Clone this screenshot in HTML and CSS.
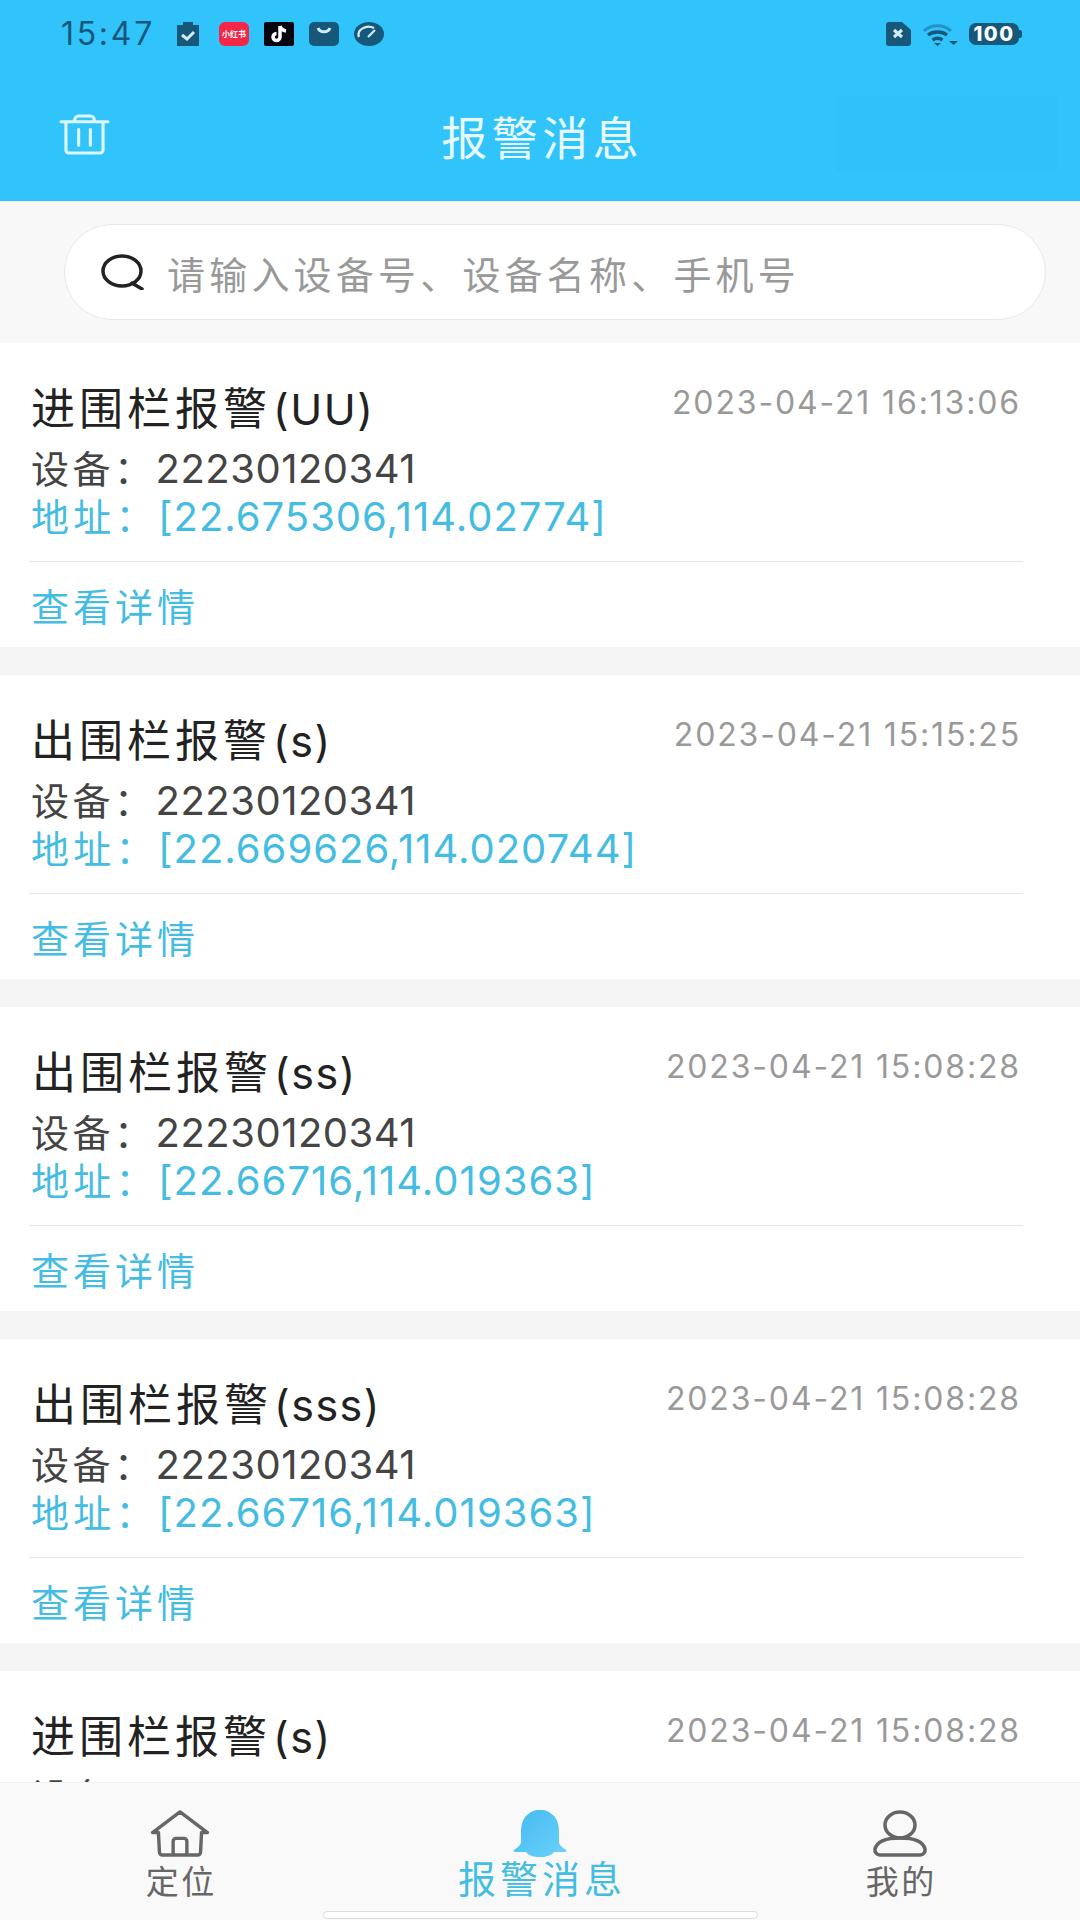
FILE: index.html
```html
<!DOCTYPE html>
<html lang="zh">
<head>
<meta charset="utf-8">
<title>报警消息</title>
<link rel="stylesheet" href="styles.css">
</head>
<body>
<div class="app">
  <header class="top">
    <div class="status">
      <span class="time">15:47</span>
      <div class="notif">
        <svg class="ni clip" viewBox="0 0 22 24"><path class="dk" d="M0 3h6V0h10v3h6v21H0z"/><path class="ck" d="M5 13l5 4 7-7"/></svg>
        <span class="ni xhs">小红书</span>
        <svg class="ni" viewBox="0 0 30 24"><rect width="30" height="24" rx="2" fill="#050512"/><path d="M16 4v11a3.500 3.500 0 1 1-3.500-3.500M16 4c1 3 3 4.500 6 5" fill="none" stroke="#fff" stroke-width="3.500"/></svg>
        <svg class="ni" viewBox="0 0 30 24"><rect width="30" height="24" rx="5" class="dk"/><path class="ck" d="M9 6c2 5 10 5 12 0"/></svg>
        <svg class="ni" viewBox="0 0 30 24"><ellipse cx="15" cy="12" rx="15" ry="12" class="dk"/><path class="ck thin" d="M5 15a10 8 0 0 1 15-9M14 15l7-7"/></svg>
      </div>
      <div class="sys">
        <svg class="sim" viewBox="0 0 25 24"><path class="dk" d="M3 0h13l9 8v13a3 3 0 0 1-3 3H3a3 3 0 0 1-3-3V3a3 3 0 0 1 3-3z"/><path class="ck" d="M8 8l8 7M16 8l-8 7"/></svg>
        <svg class="wifi" viewBox="0 0 38 24"><path d="M3 9c7-7 20-7 27 0" fill="none" stroke="#2492c6" stroke-width="3"/><path d="M7 13c5-4 14-4 19 0" fill="none" stroke="#17587a" stroke-width="3.500"/><path d="M11.500 18c3-2 7-2 10 0" fill="none" stroke="#17587a" stroke-width="3.500"/><path d="M13 21h7l-3.500 3zM28 19h9l-4.500 4z" fill="#17587a"/></svg>
        <span class="batt">100</span>
      </div>
    </div>
    <div class="bar">
      <svg class="trash" viewBox="0 0 50 42"><path d="M1 8h48M15 8V6a4 4 0 0 1 4-4h12a4 4 0 0 1 4 4v2M6 8v29a3 3 0 0 0 3 3h32a3 3 0 0 0 3-3V8M19 16v16M31 16v16"/></svg>
      <h1 class="title">报警消息</h1>
      <div class="ghost"></div>
    </div>
  </header>

  <div class="search-wrap">
    <div class="search">
      <svg class="lens" viewBox="0 0 44 36"><ellipse cx="21" cy="17" rx="19" ry="15"/><path d="M31 29l10 6"/></svg>
      <span class="ph">请输入设备号、设备名称、手机号</span>
    </div>
  </div>

  <main class="list">
    <article class="card">
      <div class="head"><h2 class="name">进围栏报警<span class="tag">(UU)</span></h2><time class="date">2023-04-21 16:13:06</time></div>
      <p class="line dev"><span class="lbl">设备：</span>22230120341</p>
      <p class="line addr"><span class="lbl">地址：</span>[22.675306,114.02774]</p>
      <div class="foot">查看详情</div>
    </article>
    <article class="card">
      <div class="head"><h2 class="name">出围栏报警<span class="tag">(s)</span></h2><time class="date">2023-04-21 15:15:25</time></div>
      <p class="line dev"><span class="lbl">设备：</span>22230120341</p>
      <p class="line addr"><span class="lbl">地址：</span>[22.669626,114.020744]</p>
      <div class="foot">查看详情</div>
    </article>
    <article class="card">
      <div class="head"><h2 class="name in">出围栏报警<span class="tag">(ss)</span></h2><time class="date">2023-04-21 15:08:28</time></div>
      <p class="line dev"><span class="lbl">设备：</span>22230120341</p>
      <p class="line addr"><span class="lbl">地址：</span>[22.66716,114.019363]</p>
      <div class="foot">查看详情</div>
    </article>
    <article class="card">
      <div class="head"><h2 class="name in">出围栏报警<span class="tag">(sss)</span></h2><time class="date">2023-04-21 15:08:28</time></div>
      <p class="line dev"><span class="lbl">设备：</span>22230120341</p>
      <p class="line addr"><span class="lbl">地址：</span>[22.66716,114.019363]</p>
      <div class="foot">查看详情</div>
    </article>
    <article class="card">
      <div class="head"><h2 class="name">进围栏报警<span class="tag">(s)</span></h2><time class="date">2023-04-21 15:08:28</time></div>
      <p class="line dev"><span class="lbl">设备：</span>22230120341</p>
    </article>
  </main>

  <nav class="tabs">
    <div class="tab">
      <svg class="ti" viewBox="0 0 60 48"><path d="M2 23L30 2l28 21h-6M8 23H2M8 23l1 20a3 3 0 0 0 3 3h36a3 3 0 0 0 3-3l1-20M23 46V32a3 3 0 0 1 3-3h8a3 3 0 0 1 3 3v14"/></svg>
      <span class="tl">定位</span>
    </div>
    <div class="tab on">
      <svg class="ti bell" viewBox="0 0 54 47"><defs><linearGradient id="bg" x1="0" y1="0" x2="1" y2="1"><stop offset="0" stop-color="#45b9ef"/><stop offset="1" stop-color="#6bd2fb"/></linearGradient></defs><path fill="url(#bg)" d="M27 0c7 0 9 2 13 5 4 4 6 9 6 17v10c0 3 3 5 7 8 1 1 0 2-1 2H41c-2 3-7 5-14 5s-12-2-14-5H2c-1 0-2-1-1-2 4-3 7-5 7-8V22c0-8 2-13 6-17 4-3 6-5 13-5z"/></svg>
      <span class="tl">报警消息</span>
    </div>
    <div class="tab">
      <svg class="ti" viewBox="0 0 60 47"><ellipse cx="30" cy="15" rx="15" ry="13"/><path d="M10 45h40a5 5 0 0 0 5-6c-2-8-13-11-25-11S7 31 5 39a5 5 0 0 0 5 6z"/></svg>
      <span class="tl">我的</span>
    </div>
    <div class="home"></div>
  </nav>
</div>
</body>
</html>
```
FILE: styles.css
```css
* { box-sizing: border-box; }
html, body { margin: 0; padding: 0; }
body { width: 1080px; height: 1920px; overflow: hidden; background: #f5f5f5; font-family: "Noto Sans CJK SC", Inter, sans-serif; }
.app { position: relative; width: 1080px; height: 1920px; overflow: hidden; display: flex; flex-direction: column; }
h1, h2, p { margin: 0; font-weight: 400; }

.top { height: 201px; background: #31c4fb; flex: none; display: flex; flex-direction: column; }
.status { height: 68px; padding: 0 61px 0 61px; display: flex; align-items: center; color: #17587a; }
.time { font: 400 32px/1 Inter, sans-serif; width: 116px; letter-spacing: 2.700px; white-space: nowrap; }
.notif { display: flex; align-items: center; gap: 15px; }
.ni { width: 30px; height: 24px; display: block; flex: none; }
.ni.clip { width: 22px; margin-right: 5px; }
.dk { fill: #17587a; }
.ck { fill: none; stroke: #cfeefa; stroke-width: 3; }
.ck.thin { stroke-width: 2.200; }
.xhs { background: #f52746; border-radius: 6px; color: #fff; font-size: 8px; line-height: 24px; text-align: center; white-space: nowrap; overflow: hidden; font-weight: 700; }
.sys { margin-left: auto; display: flex; align-items: center; gap: 10px; }
.sim { width: 25px; height: 24px; }
.wifi { width: 38px; height: 24px; }
.batt { position: relative; background: #17587a; color: #fff; border-radius: 7px; font: 800 20px/22px Inter, sans-serif; width: 50px; height: 22px; text-align: center; letter-spacing: 1.500px; }
.batt::after { content: ""; position: absolute; right: -3px; top: 7px; width: 3px; height: 8px; background: #17587a; border-radius: 0 2px 2px 0; }

.bar { flex: 1; display: flex; align-items: center; justify-content: center; position: relative; }
.trash { position: absolute; left: 59px; top: 46px; width: 51px; height: 41px; fill: none; stroke: #dff6ff; stroke-width: 3.200; stroke-linecap: round; stroke-linejoin: round; }
.title { color: #e8faff; font-size: 46px; line-height: 1; letter-spacing: 4.500px; margin-right: -4.500px; }
.ghost { position: absolute; left: 836px; top: 27px; width: 222px; height: 77px; background: #2fc2f9; }

.search-wrap { flex: none; height: 142px; background: #f8f8f8; padding: 23px 34px 0 64px; }
.search { height: 96px; background: #fff; border: 1px solid #e8e8e8; border-radius: 48px; display: flex; align-items: center; padding-left: 36px; }
.lens { width: 44px; height: 36px; margin-right: 22px; fill: none; stroke: #222; stroke-width: 3.500; stroke-linecap: round; flex: none; }
.ph { color: #999; font-size: 38px; letter-spacing: 4.200px; white-space: nowrap; }

.list { flex: 1; min-height: 0; overflow: hidden; }
.card { height: 304px; background: #fff; margin-bottom: 28px; padding: 0 31px; }
.head { height: 103px; display: flex; justify-content: space-between; padding-top: 40px; }
.name { font-size: 44px; line-height: 50px; color: #222; margin-top: -2px; white-space: nowrap; letter-spacing: 4px; }
.name.in { padding-left: 1px; }
.tag { font-family: Inter, sans-serif; font-size: 43px; letter-spacing: 1.500px; margin-left: 2px; }
.date { font: 400 32px/40px Inter, sans-serif; color: #999; letter-spacing: 1.850px; padding-right: 28px; white-space: nowrap; }
.line { font: 400 40px/48px Inter, "Noto Sans CJK SC", sans-serif; white-space: nowrap; height: 48px; }
.lbl { font-size: 38px; letter-spacing: 3.500px; }
.dev { color: #444; letter-spacing: .5px; margin-top: -1px; }
.addr { color: #45bce2; letter-spacing: 1px; }
.addr .lbl { letter-spacing: 4.300px; }
.foot { margin: 20px 0 0 -2px; border-top: 1px solid #e6e6e6; width: 994px; padding: 21px 0 0 2px; color: #45bce2; font-size: 38px; letter-spacing: 4px; line-height: 44px; }

.tabs { position: absolute; left: 0; right: 0; bottom: 0; height: 138px; background: #f9f9f9; border-top: 1px solid #f1f1f1; display: flex; }
.tab { flex: 1; display: flex; flex-direction: column; align-items: center; padding-top: 27px; color: #666; }
.ti { width: 60px; height: 47px; fill: none; stroke: #666; stroke-width: 3.500; stroke-linejoin: round; stroke-linecap: round; }
.bell { stroke: none; width: 54px; }
.tl { font-size: 33px; line-height: 38px; margin-top: 4px; letter-spacing: 2.500px; margin-right: -2.500px; }
.on .tl { color: #45bce2; font-size: 38px; letter-spacing: 4px; margin-top: 1px; margin-right: -4px; }
.home { position: absolute; left: 323px; bottom: 1px; width: 435px; height: 8px; background: #fff; border: 1px solid #ddd; border-radius: 4px; }
```
